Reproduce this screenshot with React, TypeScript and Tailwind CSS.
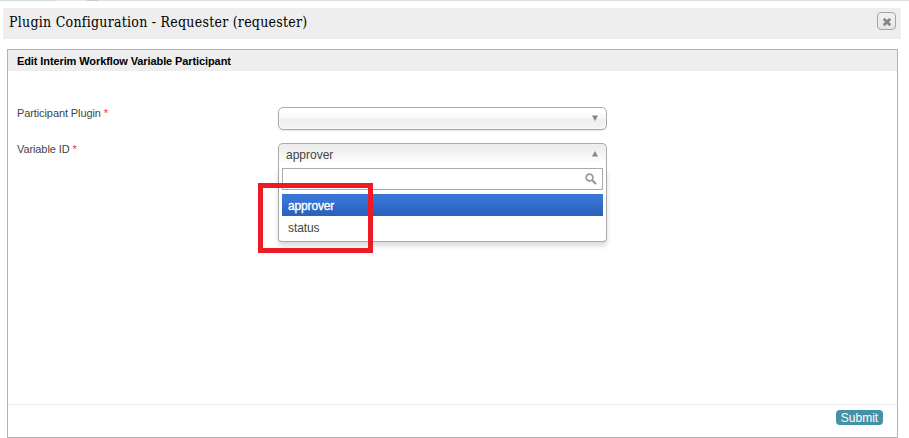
const sans = 'font-["Liberation_Sans",Arial,sans-serif]';

function TopEdge() {
  return (
    <div className="flex h-px w-full bg-[#dcdcdc]">
      <div className="w-[55px] bg-[#cfdde0]" />
      <div className="w-[32px] bg-[#e6e6e6]" />
      <div className="w-[11px] bg-[#c8c8c8]" />
      <div className="w-[127px] bg-[#dfdcdf]" />
    </div>
  );
}

function DialogHeader() {
  return (
    <header className="ml-[3px] mt-[7px] flex h-[31px] w-[898px] items-start justify-between bg-[#eeeeee] pl-[6px] pr-[5px]">
      <h1 className='whitespace-nowrap pt-[4px] font-["DejaVu_Serif_Condensed","DejaVu_Serif",serif] text-[14px] leading-[20px] tracking-[0.26px] text-black'>
        Plugin Configuration - Requester (requester)
      </h1>
      <button
        aria-label="Close"
        className="mt-[4px] flex h-[18px] w-[19px] items-center justify-center rounded-[4px] border border-[#a5a5a5] bg-linear-to-b from-[#f1f1f1] to-[#e6e6e6] pl-px pt-px"
      >
        <svg width="8" height="8" viewBox="0 0 8 8" stroke="#858585" strokeWidth="2.7">
          <path d="M.8.8 7.2 7.2M7.2.8.8 7.2" />
        </svg>
      </button>
    </header>
  );
}

function Label({ children }: { children: string }) {
  return (
    <label className="w-[261px] shrink-0 text-[11px] leading-[13px] tracking-[-0.1px] text-[#444]">
      {children} <span className="text-[#ff2a1a]">*</span>
    </label>
  );
}

function Arrow({ up = false }: { up?: boolean }) {
  return (
    <svg className="-translate-y-px" width="6" height="6" viewBox="0 0 6 6" fill="#858585">
      <path d={up ? "M0 5.5 3 0 6 5.5Z" : "M0 .5 3 6 6 .5Z"} />
    </svg>
  );
}

function VariableSelect() {
  return (
    <div className="relative h-[99px] w-[329px]">
      <div className="flex h-[25px] items-center justify-between rounded-t-[5px] border border-b-0 border-[#aaa] bg-linear-to-b from-[#eeeeee] from-20% to-white to-80% pb-[2px] pl-[7px] pr-[8px] text-[12px] leading-[18px] text-[#444]">
        <span>approver</span>
        <Arrow up />
      </div>
      <div className="h-[74px] rounded-b-[4px] border border-t-0 border-[#aaa] bg-white px-[3px] shadow-[0_4px_5px_rgba(0,0,0,0.15)]">
        <div className="flex h-[22px] items-center justify-end border border-[#aaa] bg-white pr-[5px]">
          <svg width="12" height="12" viewBox="0 0 12 12" fill="none" stroke="#999">
            <circle cx="4.5" cy="4.5" r="3.4" strokeWidth="1.7" />
            <path d="m7 7 4 4" strokeWidth="2.2" />
          </svg>
        </div>
        <ul className="mt-[4px] text-[12px] leading-[22px] text-[#444]">
          <li className="h-[22px] bg-linear-to-b from-[#3875d7] from-20% to-[#2a62bc] to-90% pl-[6px] pt-px tracking-[-0.15px] text-white [-webkit-text-stroke:0.35px_white]">
            approver
          </li>
          <li className="h-[22px] pl-[6px] pt-px tracking-[-0.1px]">status</li>
        </ul>
      </div>
      <div className="absolute -left-[20px] top-[40px] h-[70px] w-[115px] border-[5px] border-[#ed1c24]" />
    </div>
  );
}

export default function App() {
  return (
    <div className={`flex h-[438px] w-[909px] flex-col overflow-hidden bg-white ${sans}`}>
      <TopEdge />
      <DialogHeader />
      <main className="ml-[7px] mt-[10px] flex h-[389px] w-[891px] flex-col border border-[#b3b3b3]">
        <h2 className="h-[21px] bg-[#eeeeee] pl-[9px] text-[11px] font-bold leading-[22px] tracking-[-0.1px] text-black">
          Edit Interim Workflow Variable Participant
        </h2>
        <form className="flex-1 pl-[9px] pt-[36px]">
          <div className="flex h-[36px]">
            <Label>Participant Plugin</Label>
            <div className="flex h-[23px] w-[329px] items-center justify-end rounded-[5px] border border-[#aaa] bg-[linear-gradient(#fff_20%,#f6f6f6_50%,#eee_52%,#f4f4f4_100%)] pr-[8px] shadow-[inset_0_0_3px_white,0_1px_1px_rgba(0,0,0,0.1)]">
              <Arrow />
            </div>
          </div>
          <div className="flex">
            <Label>Variable ID</Label>
            <VariableSelect />
          </div>
        </form>
        <footer className="flex h-[33px] items-start justify-end border-t border-[#e9e9e9] pr-[14px] pt-[5px]">
          <button className="h-[15px] w-[47px] rounded-[4px] bg-[#4591a8] pt-px text-[12px] leading-[14px] text-white">
            Submit
          </button>
        </footer>
      </main>
    </div>
  );
}
